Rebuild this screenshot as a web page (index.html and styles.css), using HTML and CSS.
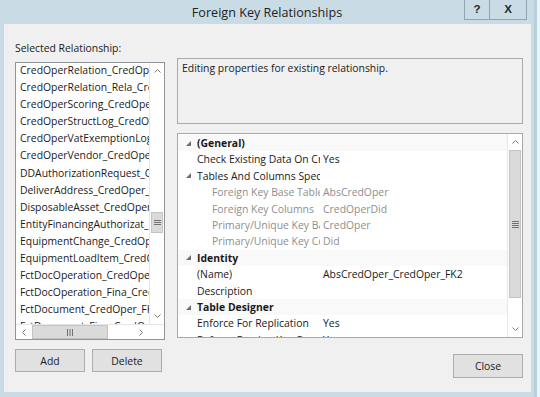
FILE: index.html
```html
<!DOCTYPE html>
<html lang="en">
<head>
    <meta charset="UTF-8">
    <title>Foreign Key Relationships</title>
    <link rel="stylesheet" href="styles.css">
</head>
<body>
    <div class="window">
        <div class="titlebar">
            <div class="title">Foreign Key Relationships</div>
            <div class="caption-buttons">
                <div class="cap-btn help">?</div>
                <div class="cap-btn close">X</div>
            </div>
        </div>

        <div class="content">
            <div class="left-col">
                <div class="label">Selected Relationship:</div>
                <div class="listbox">
                    <div class="list-main">
                        <ul class="list-items">
                            <li>CredOperRelation_CredOper_FK</li>
                            <li>CredOperRelation_Rela_CredOper_FK</li>
                            <li>CredOperScoring_CredOper_FK</li>
                            <li>CredOperStructLog_CredOper_FK</li>
                            <li>CredOperVatExemptionLog_CredOper_FK</li>
                            <li>CredOperVendor_CredOper_FK</li>
                            <li>DDAuthorizationRequest_CredOper_FK</li>
                            <li>DeliverAddress_CredOper_FK</li>
                            <li>DisposableAsset_CredOper_FK</li>
                            <li>EntityFinancingAuthorizat_FK</li>
                            <li>EquipmentChange_CredOper_FK</li>
                            <li>EquipmentLoadItem_CredOper_FK</li>
                            <li>FctDocOperation_CredOper_FK</li>
                            <li>FctDocOperation_Fina_CredOper_FK</li>
                            <li>FctDocument_CredOper_FK</li>
                            <li>FctDocument_Fina_CredOper_FK</li>
                        </ul>
                        <div class="vscroll">
                            <div class="sb-btn">
                                <svg width="7" height="4" viewBox="0 0 7 4"><polyline points="0.5,3.5 3.5,0.5 6.5,3.5" /></svg>
                            </div>
                            <div class="sb-track">
                                <div class="sb-thumb list-thumb">
                                    <svg width="7" height="5" viewBox="0 0 7 5"><path d="M0 0.5h7M0 2.5h7M0 4.5h7" /></svg>
                                </div>
                            </div>
                            <div class="sb-btn">
                                <svg width="7" height="4" viewBox="0 0 7 4"><polyline points="0.5,0.5 3.5,3.5 6.5,0.5" /></svg>
                            </div>
                        </div>
                    </div>
                    <div class="hscroll">
                        <div class="hs-btn">
                            <svg width="4" height="7" viewBox="0 0 4 7"><polyline points="3.5,0.5 0.5,3.5 3.5,6.5" /></svg>
                        </div>
                        <div class="hs-track">
                            <div class="hs-thumb">
                                <svg width="6" height="7" viewBox="0 0 6 7"><path d="M0.5 0v7M3 0v7M5.5 0v7" /></svg>
                            </div>
                        </div>
                        <div class="hs-btn">
                            <svg width="4" height="7" viewBox="0 0 4 7"><polyline points="0.5,0.5 3.5,3.5 0.5,6.5" /></svg>
                        </div>
                        <div class="hs-corner"></div>
                    </div>
                </div>
                <div class="left-buttons">
                    <button class="btn">Add</button>
                    <button class="btn">Delete</button>
                </div>
            </div>

            <div class="right-col">
                <div class="desc-box">Editing properties for existing relationship.</div>
                <div class="propgrid">
                    <div class="grid-rows" id="gridRows"></div>
                    <div class="vscroll">
                        <div class="sb-btn">
                            <svg width="7" height="4" viewBox="0 0 7 4"><polyline points="0.5,3.5 3.5,0.5 6.5,3.5" /></svg>
                        </div>
                        <div class="sb-track">
                            <div class="sb-thumb grid-thumb">
                                <svg width="7" height="7" viewBox="0 0 7 7"><path d="M0 0.5h7M0 2.5h7M0 4.5h7M0 6.5h7" /></svg>
                            </div>
                        </div>
                        <div class="sb-btn">
                            <svg width="7" height="4" viewBox="0 0 7 4"><polyline points="0.5,0.5 3.5,3.5 6.5,0.5" /></svg>
                        </div>
                    </div>
                </div>
                <div class="right-buttons">
                    <button class="btn close-btn">Close</button>
                </div>
            </div>
        </div>
    </div>

    <script>
        // 属性表的行
        const rows = [
            { type: 'cat', name: '(General)' },
            { type: 'prop', name: 'Check Existing Data On Create Or Re-Enabling', value: 'Yes' },
            { type: 'group', name: 'Tables And Columns Specification' },
            { type: 'sub', name: 'Foreign Key Base Table', value: 'AbsCredOper' },
            { type: 'sub', name: 'Foreign Key Columns', value: 'CredOperDid' },
            { type: 'sub', name: 'Primary/Unique Key Base Table', value: 'CredOper' },
            { type: 'sub', name: 'Primary/Unique Key Columns', value: 'Did' },
            { type: 'cat', name: 'Identity' },
            { type: 'prop', name: '(Name)', value: 'AbsCredOper_CredOper_FK2' },
            { type: 'prop', name: 'Description', value: '' },
            { type: 'cat', name: 'Table Designer' },
            { type: 'prop', name: 'Enforce For Replication', value: 'Yes' },
            { type: 'prop', name: 'Enforce Foreign Key Constraint', value: 'Yes' }
        ];

        const arrow = '<svg width="5" height="5" viewBox="0 0 5 5"><polygon points="5,0 5,5 0,5" /></svg>';

        const grid = document.getElementById('gridRows');
        rows.forEach(row => {
            const div = document.createElement('div');
            div.className = `grid-row row-${row.type}`;
            const expand = row.type === 'cat' || row.type === 'group';
            if (row.type === 'cat') {
                div.innerHTML = `
                    <span class="gutter">${arrow}</span>
                    <span class="cat-name">${row.name}</span>
                `;
            } else {
                div.innerHTML = `
                    <span class="gutter">${expand ? arrow : ''}</span>
                    <span class="prop-name">${row.name}</span>
                    <span class="prop-value">${row.value || ''}</span>
                `;
            }
            grid.appendChild(div);
        });
    </script>
</body>
</html>
```

FILE: styles.css
```css
:root {
    --frame-color: #c9dce5;
    --dialog-bg: #f0f0f0;
    --text-color: #1a1a1a;
    --muted-text: #8e8e8e;
    --border-color: #a9a9a9;
}

* {
    margin: 0;
    padding: 0;
    box-sizing: border-box;
}

body {
    font-family: "Open Sans", "Liberation Sans", sans-serif;
    font-size: 10.4px;
    color: var(--text-color);
    background-color: #eef3f5;
}

.window {
    width: 537px;
    height: 397px;
    background-color: var(--frame-color);
    display: flex;
    flex-direction: column;
    border-right: 3px solid #b7cfdb;
}

/* 标题栏 */
.titlebar {
    height: 24px;
    display: grid;
    grid-template-columns: 70px 1fr 70px;
}

.title {
    grid-column: 2;
    text-align: center;
    font-size: 12.6px;
    line-height: 26px;
    color: #222;
}

.caption-buttons {
    display: flex;
    height: 20px;
}

.cap-btn {
    height: 20px;
    border: 1px solid #8fa6b2;
    border-top: none;
    font-family: "Liberation Sans", sans-serif;
    font-weight: bold;
    font-size: 11.5px;
    line-height: 19px;
    text-align: center;
    color: #1e2a30;
}

.cap-btn.help {
    width: 26px;
}

.cap-btn.close {
    width: 37px;
    border-left: none;
}

/* 内容区 */
.content {
    flex: 1;
    margin: 0 3px 5px 4px;
    background-color: var(--dialog-bg);
    padding: 14px 8px 0 11px;
    display: flex;
    gap: 12px;
}

.left-col {
    width: 150px;
    display: flex;
    flex-direction: column;
}

.label {
    line-height: 20px;
    margin-bottom: 4px;
}

.listbox {
    height: 278px;
    background-color: white;
    border: 1px solid #8f949b;
    display: flex;
    flex-direction: column;
}

.list-main {
    flex: 1;
    display: flex;
    min-height: 0;
}

.list-items {
    flex: 1;
    list-style: none;
    overflow: hidden;
    padding-left: 4px;
    line-height: 17.1px;
    white-space: nowrap;
}

.list-items li:first-child {
    margin-top: -1px;
}

/* 滚动条 */
.vscroll {
    width: 15px;
    display: flex;
    flex-direction: column;
    background-color: white;
    border-left: 1px solid #e6e6e6;
}

.sb-btn {
    height: 16px;
    display: flex;
    align-items: center;
    justify-content: center;
}

.sb-btn svg,
.hs-btn svg {
    fill: none;
    stroke: #7a7a7a;
    stroke-width: 1;
}

.sb-track {
    flex: 1;
}

.sb-thumb {
    background-color: #dadada;
    border: 1px solid #c4c4c4;
    margin: 0 1px;
    display: flex;
    align-items: center;
    justify-content: center;
}

.sb-thumb svg,
.hs-thumb svg {
    stroke: #707070;
    stroke-width: 1;
}

.list-thumb {
    margin-top: 133px;
    height: 21px;
}

.grid-thumb {
    height: 148px;
}

.hscroll {
    height: 15px;
    display: flex;
    border-top: 1px solid #e6e6e6;
}

.hs-btn {
    width: 16px;
    display: flex;
    align-items: center;
    justify-content: center;
}

.hs-track {
    flex: 1;
}

.hs-thumb {
    width: 76px;
    height: 100%;
    background-color: #dadada;
    border: 1px solid #c4c4c4;
    display: flex;
    align-items: center;
    justify-content: center;
}

.hs-corner {
    width: 15px;
}

.left-buttons {
    display: flex;
    gap: 7px;
    margin-top: 9px;
}

.btn {
    width: 70px;
    height: 23px;
    font-family: inherit;
    font-size: 10.4px;
    color: var(--text-color);
    background-color: #e1e1e1;
    border: 1px solid #adadad;
}

.right-col {
    width: 346px;
    padding-top: 20px;
    display: flex;
    flex-direction: column;
}

.desc-box {
    height: 66px;
    border: 1px solid var(--border-color);
    padding: 2px 4px;
    line-height: 15px;
}

/* 属性表 */
.propgrid {
    height: 205px;
    margin-top: 9px;
    background-color: white;
    border: 1px solid var(--border-color);
    display: flex;
}

.grid-rows {
    flex: 1;
    overflow: hidden;
    padding-top: 1px;
}

.grid-row {
    height: 16.4px;
    line-height: 16.4px;
    display: grid;
    grid-template-columns: 18px 124px 1fr;
    white-space: nowrap;
}

.grid-row span {
    overflow: hidden;
}

.gutter {
    display: flex;
    align-items: center;
    justify-content: center;
    padding-left: 2px;
}

.gutter svg {
    fill: #6e6e6e;
}

.row-cat {
    background-color: #f9f9f9;
}

.cat-name {
    grid-column: 2 / 4;
    font-weight: bold;
    padding-left: 1px;
}

.prop-name {
    padding-left: 1px;
}

.prop-value {
    padding-left: 3px;
}

.row-sub .prop-name {
    padding-left: 16px;
    color: var(--muted-text);
}

.row-sub .prop-value {
    color: var(--muted-text);
}

.right-buttons {
    display: flex;
    justify-content: flex-end;
    margin-top: 16px;
}

.close-btn {
    height: 24px;
}
```
